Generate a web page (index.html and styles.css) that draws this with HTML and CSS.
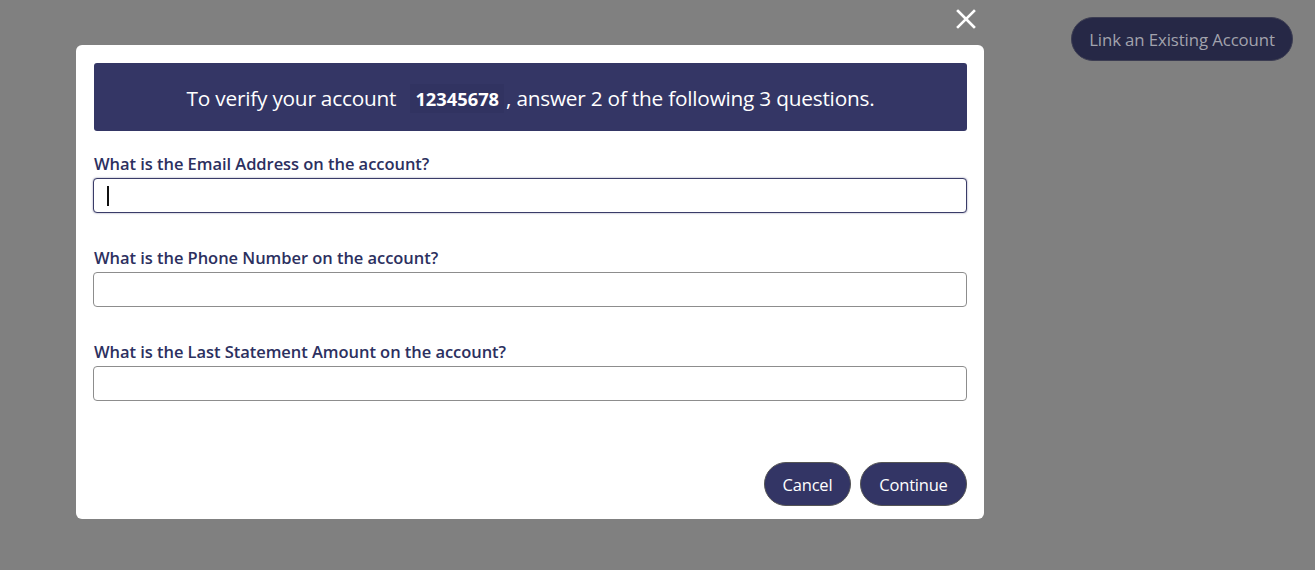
FILE: index.html
```html
<!DOCTYPE html>
<html lang="en">
<head>
<meta charset="utf-8">
<title>Verify account</title>
<link rel="stylesheet" href="styles.css">
</head>
<body>
<div class="page">
  <button class="link-btn">Link an Existing Account</button>
</div>
<button class="close" aria-label="Close">
  <svg width="20" height="20" viewBox="0 0 20 20"><path d="M2 2 L18 18 M18 2 L2 18" stroke="#fff" stroke-width="2.6" stroke-linecap="square"/></svg>
</button>
<div class="modal">
  <div class="banner">To verify your account <span class="acct">12345678</span>, answer 2 of the following 3 questions.</div>
  <div class="group">
    <label class="label">What is the Email Address on the account?</label>
    <div class="field">
      <input class="input focused" type="text">
      <span class="caret"></span>
    </div>
  </div>
  <div class="group">
    <label class="label">What is the Phone Number on the account?</label>
    <div class="field"><input class="input" type="text"></div>
  </div>
  <div class="group">
    <label class="label">What is the Last Statement Amount on the account?</label>
    <div class="field"><input class="input" type="text"></div>
  </div>
  <div class="actions">
    <button class="btn cancel">Cancel</button>
    <button class="btn continue">Continue</button>
  </div>
</div>
</body>
</html>
```
FILE: styles.css
```css
* { box-sizing: border-box; }
html, body { margin: 0; height: 570px; overflow: hidden; }
body {
  background: #808080;
  font-family: "Open Sans", "Noto Sans", sans-serif;
  position: relative;
}
.page {
  display: flex;
  justify-content: flex-end;
  padding: 17px 22px 0 0;
}
.link-btn {
  width: 222px;
  height: 44px;
  border-radius: 22px;
  background: #262846;
  border: 1px solid #3c3d52;
  color: #a2a3ad;
  font-family: inherit;
  font-size: 16.8px;
  letter-spacing: -0.1px;
  padding: 0;
}
.close {
  position: absolute;
  left: 956px;
  top: 9px;
  width: 20px;
  height: 20px;
  padding: 0;
  border: 0;
  background: none;
  display: flex;
}
.modal {
  position: absolute;
  left: 76px;
  top: 45px;
  width: 908px;
  height: 474px;
  background: #fff;
  border-radius: 6px;
  padding: 18px 17px 13px 17px;
  display: flex;
  flex-direction: column;
}
.banner {
  height: 68px;
  margin-left: 1px;
  background: #343665;
  border-radius: 3px;
  color: #fff;
  font-size: 20.8px;
  letter-spacing: -0.22px;
  display: flex;
  align-items: center;
  justify-content: center;
  white-space: pre;
  margin-bottom: 22px;
  padding-top: 2px;
}
.acct {
  font-weight: 700;
  font-size: 18.3px;
  background: #313361;
  padding: 2px 5px;
  margin: 0 2px 0 9px;
  letter-spacing: 0;
}
.group {
  display: flex;
  flex-direction: column;
  margin-bottom: 34px;
}
.label {
  color: #2c3060;
  font-size: 16.5px;
  font-weight: 600;
  letter-spacing: -0.05px;
  line-height: 22px;
  margin-bottom: 3px;
  margin-left: 1px;
}
.field { position: relative; }
.input {
  display: block;
  width: 100%;
  height: 35px;
  border: 1px solid #8d8d8d;
  border-radius: 4px;
  background: #fff;
  outline: none;
  font-family: inherit;
  font-size: 16px;
}
.input.focused {
  border: 1.5px solid #3a3c68;
  box-shadow: 0 0 2px rgba(52, 54, 101, 0.6);
}
.caret {
  position: absolute;
  left: 14px;
  top: 8px;
  width: 2px;
  height: 20px;
  background: #111;
}
.actions {
  margin-top: auto;
  display: flex;
  justify-content: flex-end;
  gap: 9px;
}
.btn {
  height: 44px;
  border-radius: 22px;
  background: #333565;
  border: 1px solid #555;
  color: #fff;
  font-family: inherit;
  font-size: 16.5px;
  letter-spacing: -0.2px;
  padding: 0;
}
.cancel { width: 87px; }
.continue { width: 107px; }
```
